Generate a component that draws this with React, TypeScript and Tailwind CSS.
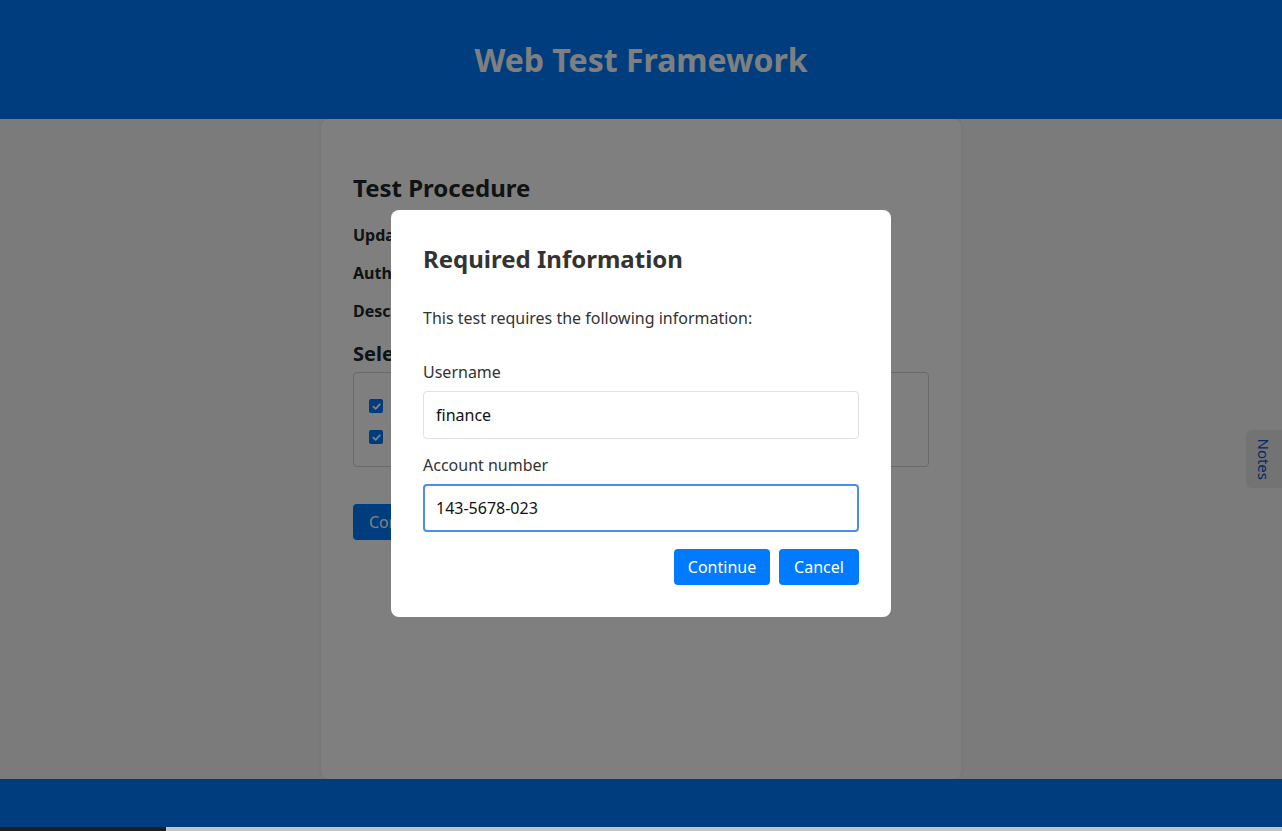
import React from "react";

function Check() {
  return (
    <span className="flex h-[14px] w-[14px] items-center justify-center rounded-[2px] bg-[#0075ff]">
      <svg viewBox="0 0 12 12" className="h-[11px] w-[11px]" fill="none" stroke="white" strokeWidth="2" strokeLinecap="round" strokeLinejoin="round">
        <path d="M2.5 6.2 L5 8.6 L9.6 3.6" />
      </svg>
    </span>
  );
}

export default function App() {
  return (
    <div className="flex h-[831px] w-[1282px] flex-col overflow-hidden bg-[#b8b8b8]" style={{ fontFamily: '"Noto Sans", "Open Sans", sans-serif' }}>
      <div className="relative flex h-[827px] w-full flex-col bg-[#f6f6f7]">
        <header className="flex h-[119px] shrink-0 items-center justify-center bg-[#007bff]">
          <h1 className="text-[32px] font-bold leading-none text-white">Web Test Framework</h1>
        </header>
        <main className="flex flex-1 justify-center">
          <section className="flex w-[640px] flex-col rounded-lg bg-white px-8 pt-[51px] shadow-[0_0_4px_rgba(0,0,0,0.08)]">
            <h2 className="text-[24px] font-bold leading-[36px] text-[#212529]">Test Procedure</h2>
            <div className="mt-[17px] flex flex-col gap-[14px] text-[16px] text-[#212529]">
              <p className="font-bold leading-6">Updated: <span className="font-normal">2024-03-18</span></p>
              <p className="font-bold leading-6">Author: <span className="font-normal">QA Team</span></p>
              <p className="font-bold leading-6">Description: <span className="font-normal">Account transfer procedure</span></p>
            </div>
            <h3 className="mt-[16px] text-[20px] font-bold leading-[30px] text-[#212529]">Select Tests</h3>
            <div className="mt-[3px] flex h-[95px] flex-col justify-center gap-[7px] rounded border border-[#ced4da] px-[15px] pt-[4px]">
              <label className="flex h-6 items-center gap-2 text-[16px] text-[#212529]"><Check />Login test</label>
              <label className="flex h-6 items-center gap-2 text-[16px] text-[#212529]"><Check />Transfer test</label>
            </div>
            <div className="mt-[37px]">
              <button className="h-[36px] rounded bg-[#007bff] px-4 text-[16px] text-white">Continue</button>
            </div>
          </section>
        </main>
        <footer className="h-[48px] shrink-0 bg-[#007bff]" />
        <div className="absolute right-0 top-[430px] flex h-[58px] w-[36px] items-center justify-center rounded-l-md bg-[#e6e6e6]">
          <span className="rotate-90 text-[15px] text-[#0056c8]">Notes</span>
        </div>
        <div className="absolute inset-0 bg-black/50">
          <div className="flex justify-center pt-[210px]">
            <div className="flex w-[500px] flex-col rounded-lg bg-white px-8 pb-[32px] pt-[33px]">
              <h2 className="text-[24px] font-bold leading-[32px] text-[#333]">Required Information</h2>
              <p className="mt-[31px] text-[16px] leading-6 text-[#333]">This test requires the following information:</p>
              <label className="mt-[30px] text-[16px] leading-6 text-[#333]">Username</label>
              <div className="mt-[7px] flex h-[48px] items-center rounded border border-[#dee2e6] px-3 text-[16px] text-[#111]">finance</div>
              <label className="mt-[14px] text-[16px] leading-6 text-[#333]">Account number</label>
              <div className="mt-[7px] flex h-[48px] items-center rounded border-2 border-[#4a8ee6] px-[11px] text-[16px] text-[#111]">143-5678-023</div>
              <div className="mt-[17px] flex justify-end gap-[9px]">
                <button className="h-[36px] w-[96px] rounded bg-[#007bff] text-[16px] text-white">Continue</button>
                <button className="h-[36px] w-[80px] rounded bg-[#007bff] text-[16px] text-white">Cancel</button>
              </div>
            </div>
          </div>
        </div>
      </div>
      <div className="flex h-[4px] w-full">
        <div className="w-[166px] bg-[#1e1e1e]" />
        <div className="flex-1 bg-[#c4c4c4]" />
      </div>
    </div>
  );
}
